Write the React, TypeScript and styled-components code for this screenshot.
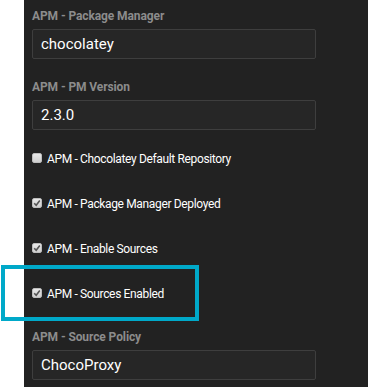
import React from "react";
import styled, { createGlobalStyle } from "styled-components";

const Global = createGlobalStyle`
  html, body { margin: 0; padding: 0; background: #ffffff; }
  body { font-family: Roboto, "Liberation Sans", Arial, sans-serif; }
`;

const Page = styled.div`
  position: relative;
  width: 368px;
  height: 387px;
  overflow: hidden;
  background: #ffffff;
`;

const Panel = styled.div`
  margin-left: 24px;
  height: 387px;
  background: #222222;
  padding: 9px 0 0 8px;
  box-sizing: border-box;
  display: flex;
  flex-direction: column;
`;

const Field = styled.div<{ $top?: number }>`
  display: flex;
  flex-direction: column;
  gap: 6px;
  margin-top: ${(p) => p.$top ?? 0}px;
`;

const Label = styled.div`
  font-size: 12px;
  line-height: 14px;
  font-weight: 700;
  color: #8c8c8c;
  letter-spacing: -0.1px;
`;

const Input = styled.div`
  width: 284px;
  height: 30px;
  box-sizing: border-box;
  background: #262626;
  border: 1px solid #3e3e3e;
  border-radius: 2px;
  padding: 0 8px;
  display: flex;
  align-items: center;
  font-size: 15px;
  font-weight: 400;
  color: #ffffff;
`;

const Checks = styled.div`
  margin-top: 6px;
  display: flex;
  flex-direction: column;
`;

const CheckRow = styled.div`
  height: 45px;
  display: flex;
  align-items: center;
  gap: 5px;
  font-size: 12px;
  letter-spacing: -0.35px;
  color: #ffffff;
`;

const Box = styled.span`
  width: 10px;
  height: 10px;
  box-sizing: border-box;
  border-radius: 2px;
  background: linear-gradient(#e8e8e8, #cfcfcf);
  border: 1px solid #bdbdbd;
  display: flex;
  align-items: center;
  justify-content: center;
  margin-top: -2px;
`;

const Highlight = styled.div`
  position: absolute;
  left: 1px;
  top: 265px;
  width: 198px;
  height: 56px;
  box-sizing: border-box;
  border: 4px solid #00a9c9;
`;

const Check = ({ checked, label }: { checked: boolean; label: string }) => (
  <CheckRow>
    <Box>
      {checked && (
        <svg width="8" height="8" viewBox="0 0 8 8">
          <path d="M1.2 4.2 L3.2 6.2 L6.8 1.6" fill="none" stroke="#555" strokeWidth="1.6" />
        </svg>
      )}
    </Box>
    <span>{label}</span>
  </CheckRow>
);

export default function App() {
  return (
    <Page>
      <Global />
      <Panel>
        <Field>
          <Label>APM - Package Manager</Label>
          <Input>chocolatey</Input>
        </Field>
        <Field $top={21}>
          <Label>APM - PM Version</Label>
          <Input>2.3.0</Input>
        </Field>
        <Checks>
          <Check checked={false} label="APM - Chocolatey Default Repository" />
          <Check checked label="APM - Package Manager Deployed" />
          <Check checked label="APM - Enable Sources" />
          <Check checked label="APM - Sources Enabled" />
        </Checks>
        <Field $top={14}>
          <Label>APM - Source Policy</Label>
          <Input>ChocoProxy</Input>
        </Field>
      </Panel>
      <Highlight />
    </Page>
  );
}
